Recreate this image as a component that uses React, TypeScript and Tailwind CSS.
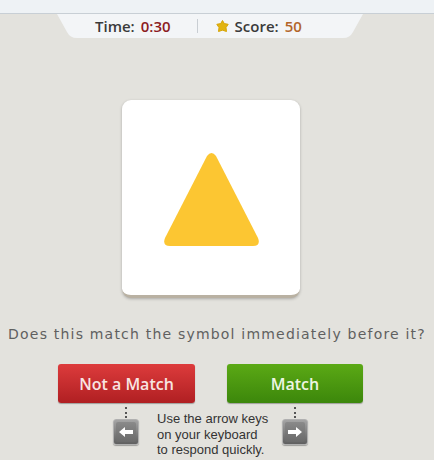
import React from "react";

const font = { fontFamily: '"DejaVu Sans", Verdana, sans-serif' };
const semi = { fontFamily: '"Open Sans", "DejaVu Sans", sans-serif' };

function KeyIcon({ dir }: { dir: "left" | "right" }) {
  return (
    <div className="flex flex-col items-center">
      <div className="h-[11px] w-0 border-l-2 border-dotted border-[#555]" />
      <div className="mt-[1px] w-[26px] h-[26px] rounded-[3px] border border-[#b0b0b0] bg-gradient-to-b from-[#a5a5a5] to-[#606060] flex items-center justify-center shadow-[0_1px_1px_rgba(0,0,0,0.3)]">
        <div className="w-[20px] h-[20px] rounded-[2px] bg-gradient-to-b from-[#8a8a8a] to-[#6a6a6a] flex items-center justify-center">
          <svg width="16" height="12" viewBox="0 0 16 12">
            {dir === "left" ? (
              <path d="M1 6 L7 1 L7 4 L15 4 L15 8 L7 8 L7 11 Z" fill="#fff" />
            ) : (
              <path d="M15 6 L9 1 L9 4 L1 4 L1 8 L9 8 L9 11 Z" fill="#fff" />
            )}
          </svg>
        </div>
      </div>
    </div>
  );
}

export default function App() {
  return (
    <div className="w-[434px] h-[460px] bg-[#e3e2dd] overflow-hidden" style={font}>
      <div className="h-[14px] bg-[#eef2f5] border-b border-[#c8cfd5]" />
      <div className="relative ml-[57px] w-[306px] h-[24px]">
        <svg className="absolute inset-0" width="306" height="24" viewBox="0 0 306 24">
          <path d="M0 0 L306 0 L296 18 Q293 24 286 24 L20 24 Q13 24 10 18 Z" fill="#f3f5f7" />
        </svg>
        <div className="relative flex items-center h-full text-[15px] font-semibold text-[#3a3a3a] pl-[38px]" style={semi}>
          <span>Time:</span>
          <span className="ml-[6px] text-[#8c1c22]">0:30</span>
          <div className="ml-[26px] w-px h-[14px] bg-[#c9ced3]" />
          <svg className="ml-[18px]" width="13" height="12" viewBox="0 0 13 12">
            <path d="M6.5 0.5 L8.3 3.6 L12.2 4.3 L10 7.6 L10.5 11.5 L6.5 10.2 L2.5 11.5 L3 7.6 L0.8 4.3 L4.7 3.6 Z" fill="#e2b411" stroke="#d6a50a" strokeWidth="1" strokeLinejoin="round" />
          </svg>
          <span className="ml-[6px]">Score:</span>
          <span className="ml-[6px] text-[#b2652a]">50</span>
        </div>
      </div>

      <div className="mt-[62px] ml-[122px] w-[178px] h-[198px] bg-white rounded-[9px] border-b-[3px] border-[#b9b1a2] shadow-[0_1px_3px_rgba(0,0,0,0.25)] flex items-center justify-center">
        <svg width="97" height="95" viewBox="0 0 97 95" className="mt-[4px]">
          <path d="M44 4 Q48.5 -2 53 4 L95 86 Q98 94 90 94 L7 94 Q-1 94 2 86 Z" fill="#fcc632" />
        </svg>
      </div>

      <div className="mt-[26px] text-center text-[14px] tracking-[1.2px] text-[#606060]">
        Does this match the symbol immediately before it?
      </div>

      <div className="mt-[19px] ml-[58px] flex gap-[32px] text-[16px] font-semibold" style={semi}>
        <div className="w-[137px] h-[39px] rounded-[3px] bg-gradient-to-b from-[#dd3b3c] to-[#b01f22] flex items-center justify-center text-[#f8e4e2] shadow-[0_1px_1px_rgba(0,0,0,0.3)]">
          Not a Match
        </div>
        <div className="w-[136px] h-[39px] rounded-[3px] bg-gradient-to-b from-[#5ba915] to-[#3c870b] flex items-center justify-center text-[#eef5e2] shadow-[0_1px_1px_rgba(0,0,0,0.3)]">
          Match
        </div>
      </div>

      <div className="mt-[4px] ml-[113px] flex items-start">
        <KeyIcon dir="left" />
        <div className="ml-[18px] mt-[4px] text-[13px] leading-[15.5px] text-[#333]" style={{ fontFamily: '"Liberation Sans", Arial, sans-serif' }}>
          Use the arrow keys
          <br />
          on your keyboard
          <br />
          to respond quickly.
        </div>
        <div className="ml-[14px]">
          <KeyIcon dir="right" />
        </div>
      </div>
    </div>
  );
}
